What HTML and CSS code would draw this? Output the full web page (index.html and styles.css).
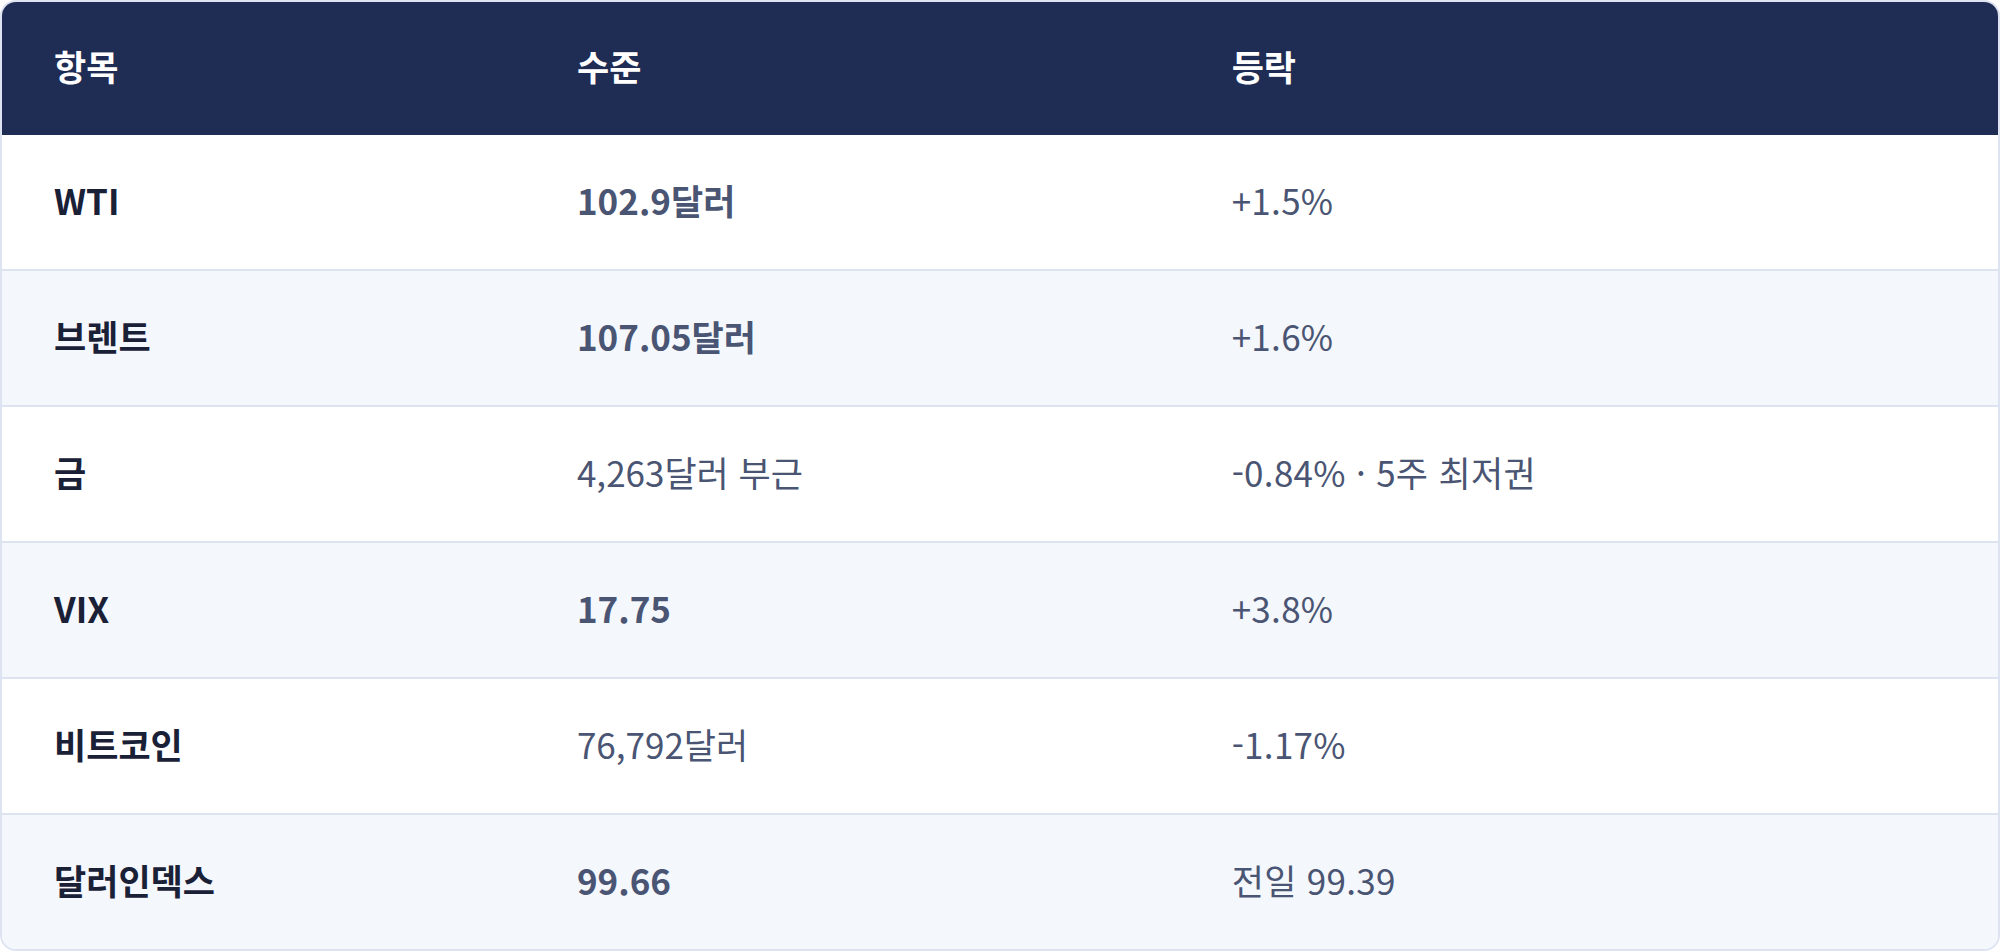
FILE: index.html
```html
<!DOCTYPE html>
<html lang="ko">
<head>
<meta charset="utf-8">
<title>시장 지표</title>
<link rel="stylesheet" href="styles.css">
</head>
<body>
<div class="card">
  <table class="market">
    <colgroup>
      <col class="c1"><col class="c2"><col class="c3">
    </colgroup>
    <thead>
      <tr><th>항목</th><th>수준</th><th>등락</th></tr>
    </thead>
    <tbody>
      <tr><td class="name">WTI</td><td class="val strong">102.9달러</td><td class="chg">+1.5%</td></tr>
      <tr class="alt"><td class="name">브렌트</td><td class="val strong">107.05달러</td><td class="chg">+1.6%</td></tr>
      <tr><td class="name">금</td><td class="val">4,263달러 부근</td><td class="chg">-0.84% · 5주 최저권</td></tr>
      <tr class="alt"><td class="name">VIX</td><td class="val strong">17.75</td><td class="chg">+3.8%</td></tr>
      <tr><td class="name">비트코인</td><td class="val">76,792달러</td><td class="chg">-1.17%</td></tr>
      <tr class="alt last"><td class="name">달러인덱스</td><td class="val strong">99.66</td><td class="chg">전일 99.39</td></tr>
    </tbody>
  </table>
</div>
</body>
</html>
```
FILE: styles.css
```css
html, body {
  margin: 0;
  padding: 0;
  background: #ffffff;
}
body {
  font-family: "Noto Sans CJK KR", "Noto Sans", sans-serif;
}
.card {
  width: 100%;
  box-sizing: border-box;
  border: 2px solid #dde3f0;
  border-radius: 16px;
  overflow: hidden;
  background: #ffffff;
}
.market {
  width: 100%;
  border-collapse: separate;
  border-spacing: 0;
  table-layout: fixed;
}
.c1 { width: 26.2%; }
.c2 { width: 32.8%; }
.c3 { width: 41%; }
.market th {
  height: 133px;
  padding: 0 0 6px 52px;
  background: #1f2c54;
  color: #ffffff;
  font-size: 35px;
  font-weight: 700;
  text-align: left;
  box-sizing: border-box;
}
.market td {
  height: 136px;
  padding: 0 0 5px 52px;
  border-bottom: 2px solid #dde3f0;
  font-size: 35px;
  text-align: left;
  color: #4a5573;
  font-weight: 400;
  box-sizing: border-box;
}
.market td.chg {
  letter-spacing: 0.3px;
}
.market tr.alt td {
  background: #f4f7fc;
}
.market tr.last td {
  border-bottom: 0;
  height: 134px;
}
.market td.name {
  color: #1a2136;
  font-weight: 700;
}
.market td.strong {
  font-weight: 700;
}
```
